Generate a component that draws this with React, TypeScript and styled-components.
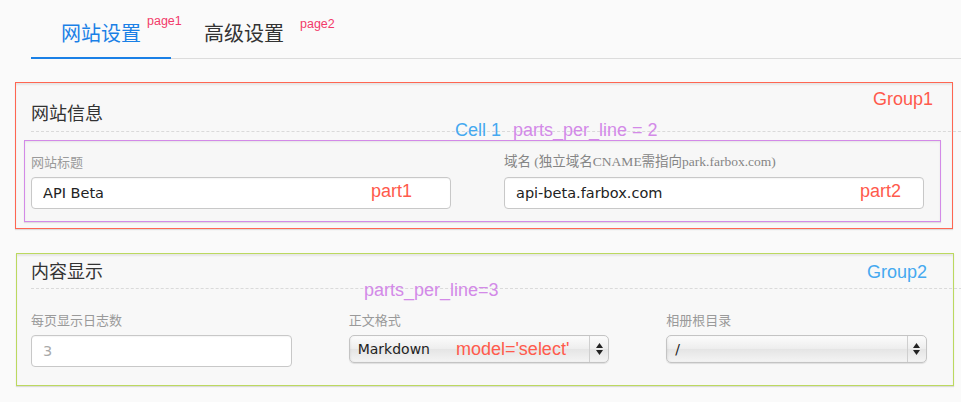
import React from 'react'
import styled, { createGlobalStyle } from 'styled-components'

const GlobalStyle = createGlobalStyle`
    html, body {
        margin: 0;
        padding: 0;
        background: #fafafa;
        overflow: hidden;
    }
    body {
        font-family: 'Noto Sans CJK SC', 'Liberation Sans', sans-serif;
        color: #333;
    }
`

const Page = styled.main`
    width: 961px;
    height: 402px;
    overflow: hidden;
`

/* ---------- tabs ---------- */

const TabBar = styled.nav`
    display: flex;
    align-items: flex-end;
    gap: 3px;
    height: 58px;
    margin: 0 0 23px 31px;
    border-bottom: 1px solid #dcdcdc;
`

const Tab = styled.div<{ $active?: boolean }>`
    width: 140px;
    padding: 20px 0 11px;
    margin-bottom: -1px;
    text-align: center;
    font-size: 20px;
    line-height: 26px;
    color: ${(p) => (p.$active ? '#1a80e6' : '#333')};
    border-bottom: 2px solid ${(p) => (p.$active ? '#1a80e6' : 'transparent')};
`

const TabLabel = styled.span`
    position: relative;
    display: inline-block;
`

const PageTag = styled.span<{ $gap: number; $top: number }>`
    position: absolute;
    left: calc(100% + ${(p) => p.$gap}px);
    top: ${(p) => p.$top}px;
    font-family: 'Liberation Sans', Arial, sans-serif;
    font-size: 12.5px;
    line-height: 14px;
    color: #f23a6a;
    white-space: nowrap;
`

/* ---------- groups ---------- */

const Group = styled.section<{ $accent: string; $pad: string; $margin: string }>`
    position: relative;
    margin: ${(p) => p.$margin};
    padding: ${(p) => p.$pad};
    background: #f8f8f8;
    border: 1px solid ${(p) => p.$accent};
    box-shadow: inset 0 2px 2px rgba(0, 0, 0, 0.07), 0 1px 1px rgba(0, 0, 0, 0.12);
`

const Note = styled.span<{ $color: string }>`
    font-family: 'Liberation Sans', Arial, sans-serif;
    font-size: 18px;
    line-height: 20px;
    color: ${(p) => p.$color};
    white-space: nowrap;
`

const GroupTag = styled(Note)<{ $top: number; $right: number }>`
    position: absolute;
    top: ${(p) => p.$top}px;
    right: ${(p) => p.$right}px;
`

const Header = styled.header`
    position: relative;
`

const Title = styled.h2`
    margin: 0;
    font-size: 18px;
    line-height: 24px;
    font-weight: normal;
    color: #333;
`

const Divider = styled.div<{ $gap: number }>`
    margin: ${(p) => p.$gap}px -60px 0 0;
    border-top: 1px dashed #dadada;
`

const HeaderNote = styled.div<{ $left: number; $top: number }>`
    position: absolute;
    left: ${(p) => p.$left}px;
    top: ${(p) => p.$top}px;
    display: flex;
    gap: 12px;
`

const Cell = styled.div`
    display: grid;
    grid-template-columns: 1fr 1fr;
    column-gap: 53px;
    margin: 8px 0 0 -7px;
    padding: 13px 16px 12px 6px;
    border: 1px solid #d38ae8;
    background: #f7f7f7;
    box-shadow: inset 0 1px 2px rgba(0, 0, 0, 0.08), 0 1px 1px rgba(0, 0, 0, 0.1);
`

const Row = styled.div`
    display: grid;
    grid-template-columns: repeat(3, 1fr);
    column-gap: 57px;
    margin-top: 23px;
`

const Field = styled.div`
    position: relative;
    display: flex;
    flex-direction: column;
    align-items: stretch;
`

const Label = styled.label<{ $serif?: boolean }>`
    margin-bottom: 7px;
    font-family: ${(p) =>
        p.$serif
            ? "'Liberation Serif', 'Noto Sans CJK SC', serif"
            : "'Noto Sans CJK SC', 'Liberation Sans', sans-serif"};
    font-size: ${(p) => (p.$serif ? '13.5px' : '13px')};
    line-height: 16px;
    color: ${(p) => (p.$serif ? '#858585' : '#9a9a9a')};
    white-space: nowrap;
`

const TextInput = styled.input`
    box-sizing: border-box;
    width: 100%;
    height: 32px;
    margin: 0;
    padding: 0 11px;
    border: 1px solid #c8c8c8;
    border-radius: 4px;
    background: #fff;
    box-shadow: inset 0 1px 1px rgba(0, 0, 0, 0.04);
    font-family: 'DejaVu Sans', sans-serif;
    font-size: 14.5px;
    color: #222;
    outline: none;

    &::placeholder {
        color: #aaa;
    }
`

const SelectBox = styled.div`
    box-sizing: border-box;
    display: flex;
    align-items: stretch;
    height: 28px;
    border: 1px solid #c4c4c4;
    border-radius: 5px;
    background: linear-gradient(#fcfcfc 0%, #eeeeee 48%, #e5e5e5 52%, #f4f4f4 100%);
    box-shadow: 0 1px 1px rgba(0, 0, 0, 0.1), inset 1px 0 2px rgba(0, 0, 0, 0.05);
`

const SelectValue = styled.span`
    flex: 1;
    padding-left: 8px;
    font-family: 'DejaVu Sans', sans-serif;
    font-size: 14px;
    line-height: 26px;
    color: #222;
`

const SelectCap = styled.span`
    display: flex;
    align-items: center;
    justify-content: center;
    width: 18px;
    border-left: 1px solid #cfcfcf;
`

const PartTag = styled(Note)<{ $right: number }>`
    position: absolute;
    top: 27px;
    right: ${(p) => p.$right}px;
`

const Arrows: React.FC = () => (
    <svg width="7" height="12" viewBox="0 0 7 12">
        <polygon points="0,5 3.5,0 7,5" fill="#222" />
        <polygon points="0,7 3.5,12 7,7" fill="#222" />
    </svg>
)

interface SelectProps {
    value: string
}

const Select: React.FC<SelectProps> = ({ value }) => (
    <SelectBox>
        <SelectValue>{value}</SelectValue>
        <SelectCap>
            <Arrows />
        </SelectCap>
    </SelectBox>
)

const RED = '#ff5a4c'
const BLUE = '#45a9f0'
const PURPLE = '#d38ae8'

const App: React.FC = () => {
    return (
        <Page>
            <GlobalStyle />
            <TabBar>
                <Tab $active>
                    <TabLabel>
                        网站设置
                        <PageTag $gap={6} $top={-6}>page1</PageTag>
                    </TabLabel>
                </Tab>
                <Tab>
                    <TabLabel>
                        高级设置
                        <PageTag $gap={16} $top={-3}>page2</PageTag>
                    </TabLabel>
                </Tab>
            </TabBar>

            <Group $accent="#ff6652" $pad="17px 11px 6px 15px" $margin="0 8px 24px 15px">
                <GroupTag $color={RED} $top={6} $right={19}>
                    Group1
                </GroupTag>
                <Header>
                    <Title>网站信息</Title>
                    <Divider $gap={7} />
                    <HeaderNote $left={424} $top={20}>
                        <Note $color={BLUE}>Cell 1</Note>
                        <Note $color={PURPLE}>parts_per_line = 2</Note>
                    </HeaderNote>
                </Header>
                <Cell>
                    <Field>
                        <Label>网站标题</Label>
                        <TextInput readOnly value="API Beta" />
                        <PartTag $color={RED} $right={39}>
                            part1
                        </PartTag>
                    </Field>
                    <Field>
                        <Label $serif>域名 (独立域名CNAME需指向park.farbox.com)</Label>
                        <TextInput readOnly value="api-beta.farbox.com" />
                        <PartTag $color={RED} $right={23}>
                            part2
                        </PartTag>
                    </Field>
                </Cell>
            </Group>

            <Group $accent="#bcd95f" $pad="4px 26px 18px 14px" $margin="0 7px 0 16px">
                <GroupTag $color={BLUE} $top={8} $right={26}>
                    Group2
                </GroupTag>
                <Header>
                    <Title>内容显示</Title>
                    <Divider $gap={6} />
                    <HeaderNote $left={333} $top={22}>
                        <Note $color={PURPLE}>parts_per_line=3</Note>
                    </HeaderNote>
                </Header>
                <Row>
                    <Field>
                        <Label>每页显示日志数</Label>
                        <TextInput readOnly placeholder="3" />
                    </Field>
                    <Field>
                        <Label>正文格式</Label>
                        <Select value="Markdown" />
                        <PartTag $color={RED} $right={40}>
                            model='select'
                        </PartTag>
                    </Field>
                    <Field>
                        <Label>相册根目录</Label>
                        <Select value="/" />
                    </Field>
                </Row>
            </Group>
        </Page>
    )
}

export default App
